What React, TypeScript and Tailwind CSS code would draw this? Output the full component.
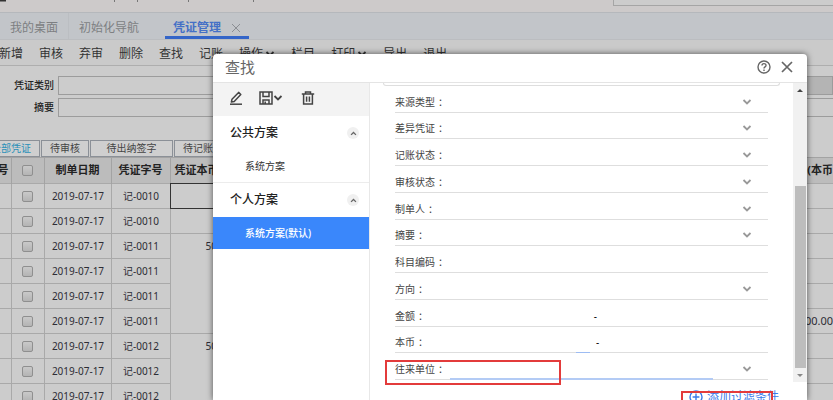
import { ReactNode } from 'react';

const toolbarItems = [
  { name: '新增' },
  { name: '审核' },
  { name: '弃审' },
  { name: '删除' },
  { name: '查找' },
  { name: '记账' },
  { name: '操作', menu: true },
  { name: '栏目' },
  { name: '打印', menu: true },
  { name: '导出' },
  { name: '退出' },
];

// span: how many rows the amount cell covers
const vouchers = [
  { no: '记-0010', span: 1, amount: '', right: '', active: true },
  { no: '记-0010', span: 1, amount: '', right: '' },
  { no: '记-0011', span: 4, amount: '50', right: '' },
  { no: '记-0011', span: 0, amount: '', right: '' },
  { no: '记-0011', span: 0, amount: '', right: '' },
  { no: '记-0011', span: 0, amount: '', right: '00.00' },
  { no: '记-0012', span: 3, amount: '50', right: '' },
  { no: '记-0012', span: 0, amount: '', right: '' },
  { no: '记-0012', span: 0, amount: '', right: '' },
];

const fields = [
  { label: '来源类型', type: 'select' },
  { label: '差异凭证', type: 'select' },
  { label: '记账状态', type: 'select' },
  { label: '审核状态', type: 'select' },
  { label: '制单人', type: 'select' },
  { label: '摘要', type: 'select' },
  { label: '科目编码', type: 'text' },
  { label: '方向', type: 'select' },
  { label: '金额', type: 'range' },
  { label: '本币', type: 'range' },
  { label: '往来单位', type: 'select' },
];

function Chevron({ className = '', up = false }: { className?: string; up?: boolean }) {
  return (
    <svg viewBox="0 0 10 10" className={`shrink-0 ${className}`} fill="none" stroke="currentColor" strokeWidth="1.8">
      <path d={up ? 'M1.5 7 5 3.5 8.5 7' : 'M1.5 3 5 6.5 8.5 3'} />
    </svg>
  );
}

function PageHeader() {
  return (
    <>
      <div className="flex h-3 justify-end bg-[#cdcaca]">
        <svg viewBox="0 0 260 3" className="mr-auto h-[3px] w-[260px]" fill="#777">
          <rect width="6" height="1.5" fill="#333" />
          <rect x="114" width="1" height="2" />
          <rect x="137" width="1" height="2" />
          <rect x="188" width="1" height="2" />
          <rect x="253" width="1" height="2" />
        </svg>
        <div className="h-1.5 w-[220px] border-b border-l border-[#a5a5a5] bg-[#cccccc]" />
      </div>
      <nav className="flex h-7 items-stretch border-y border-t-[#b5b8bc] border-b-[#bbbdc0] bg-[#c2c5c9] text-[12px] text-[#7d7f82]">
        <a href="#desktop" className="flex items-center border-r border-[#bbbec2] px-2.5 pt-1">我的桌面</a>
        <a href="#init" className="flex items-center px-2.5 pt-1">初始化导航</a>
        <div className="ml-4 flex w-[84px] items-center justify-between border-b-[3px] border-[#3465c8] pt-1.5 pr-2 pl-2">
          <a href="#voucher" className="font-bold text-[#4470c6]">凭证管理</a>
          <button aria-label="关闭">
            <svg viewBox="0 0 10 10" className="size-2.5" stroke="#8b8e93" fill="none">
              <path d="M1 1 9 9M9 1 1 9" />
            </svg>
          </button>
        </div>
      </nav>
      <div className="flex h-[26px] items-center gap-4 border-b border-[#aeaeae] bg-[#cacaca] pt-0.5 text-[12px] text-[#333]">
        {toolbarItems.map(({ name, menu }) => (
          <button key={name} className="flex shrink-0 items-center first:-ml-px">
            {name}
            {menu && <Chevron className="ml-0.5 size-2.5" />}
          </button>
        ))}
      </div>
    </>
  );
}

function FilterForm() {
  return (
    <form className="flex flex-col gap-[3px] pt-2.5 pb-[23px] text-[10px] font-medium text-[#222]">
      <div className="flex h-[19px] items-center">
        <label htmlFor="kind" className="w-[58px] pr-1 text-right">凭证类别</label>
        <input id="kind" className="h-full min-w-0 flex-1 border border-[#9c9c9c] bg-[#cccccc]" />
        <input aria-label="凭证字号" disabled className="h-full min-w-0 flex-1 border border-[#9c9c9c] bg-[#b4b4b4]" />
      </div>
      <div className="flex h-[19px] items-center">
        <label htmlFor="summary" className="w-[58px] pr-1 text-right">摘要</label>
        <input id="summary" className="h-full min-w-0 flex-1 border border-r-0 border-[#9c9c9c] bg-[#cccccc]" />
      </div>
    </form>
  );
}

function Check({ label }: { label: string }) {
  return (
    <input
      type="checkbox"
      aria-label={label}
      className="mx-auto block size-[11px] appearance-none rounded-[2px] border border-[#8f8f8f] bg-linear-to-b from-[#c9c9c9] to-[#b4b4b4]"
    />
  );
}

function VoucherTable() {
  return (
    <>
      <div className="flex h-[17px] gap-px text-[10px] text-[#444]">
        <button className="flex w-10 shrink-0 items-center justify-end border border-l-0 border-[#8b9097] bg-[#cfcfcf] pr-2 whitespace-nowrap text-[#2b8fb8]">
          全部凭证
        </button>
        <button className="w-12 shrink-0 border border-[#8b9097] bg-[#cfcfcf]">待审核</button>
        <button className="w-[83px] shrink-0 border border-[#8b9097] bg-[#cfcfcf]">待出纳签字</button>
        <button className="w-12 shrink-0 border border-[#8b9097] bg-[#cfcfcf]">待记账</button>
      </div>
      <table className="w-full table-fixed border-collapse text-[10px] text-[#2d2d35]">
        <colgroup>
          <col className="w-[11px]" />
          <col className="w-[33px]" />
          <col className="w-[67px]" />
          <col className="w-[59px]" />
          <col className="w-[60px]" />
          <col />
        </colgroup>
        <thead className="bg-[#bcbcbc] text-[11px] text-[#222]">
          <tr className="h-[26px] border-y border-[#a3a3a3] whitespace-nowrap">
            <th className="border-r border-[#a3a3a3]">
              <div className="flex justify-end pr-0.5">号</div>
            </th>
            <th className="border-r border-[#a3a3a3]"><Check label="全选" /></th>
            <th className="border-r border-[#a3a3a3]">制单日期</th>
            <th className="border-r border-[#a3a3a3]">凭证字号</th>
            <th className="pl-1 text-left">凭证本币</th>
            <th className="text-right">(本币</th>
          </tr>
        </thead>
        <tbody>
          {vouchers.map((v, i) => (
            <tr key={i} className="h-[25px]">
              <td className="border border-l-0 border-[#a9a9a9]" />
              <td className="border border-[#a9a9a9]"><Check label={v.no} /></td>
              <td className="border border-[#a9a9a9] pl-px text-center">2019-07-17</td>
              <td className="border border-[#a9a9a9] pl-px text-center">{v.no}</td>
              {v.span > 0 && (
                <td
                  rowSpan={v.span}
                  className={`align-top leading-6 ${v.active ? 'border border-double border-[#333]' : 'border border-[#a9a9a9]'}`}
                >
                  <div className="pl-[35px]">{v.amount}</div>
                </td>
              )}
              <td className="border-y border-[#a9a9a9] text-right text-[11px]">{v.right}</td>
            </tr>
          ))}
        </tbody>
      </table>
    </>
  );
}

function Scheme({ title, children }: { title: string; children: ReactNode }) {
  return (
    <section className="border-b border-[#ececec] last:border-0">
      <div className="flex h-[34px] items-center justify-between pr-2.5 pl-[17px]">
        <h3 className="text-[12px] font-medium text-[#222]">{title}</h3>
        <button aria-label={title} className="flex size-3 items-center justify-center rounded-full bg-[#f0f0f0] text-[#666]">
          <Chevron up className="size-[7px]" />
        </button>
      </div>
      {children}
    </section>
  );
}

function SchemePanel() {
  return (
    <aside className="w-[157px] shrink-0 border-r border-[#e8e8e8]">
      <div className="flex h-[33px] items-center bg-[#f3f3f3] pr-4 pb-1 pl-4 text-[#444]">
        <button aria-label="编辑">
          <svg viewBox="0 0 14 14" className="size-3.5" fill="none" stroke="currentColor" strokeWidth="1.5">
            <path d="M3 8.2 9.6 1.4 11.8 3.6 5.2 10.4 2.4 11Z" strokeLinejoin="round" />
            <path d="M1 13.2H13" />
          </svg>
        </button>
        <button aria-label="保存" className="ml-4 flex items-center">
          <svg viewBox="0 0 14 14" className="size-3.5" fill="none" stroke="currentColor" strokeWidth="1.5">
            <path d="M1 1H13V13H1Z" />
            <path d="M4 1V5.4H10V1M4 13V9H10V13M6.2 10.5V13" />
          </svg>
          <Chevron className="size-2.5" />
        </button>
        <button aria-label="删除" className="ml-[18px]">
          <svg viewBox="0 0 14 14" className="size-3.5" fill="none" stroke="currentColor" strokeWidth="1.5">
            <path d="M.8 3H13.2M4.5 3V1H9.5V3M2.6 3V13H11.4V3M5.6 5.4V10.8M8.4 5.4V10.8" />
          </svg>
        </button>
      </div>
      <Scheme title="公共方案">
        <button className="block h-8 w-full pl-8 text-left text-[10px] text-[#333]">系统方案</button>
      </Scheme>
      <Scheme title="个人方案">
        <button className="block h-8 w-full bg-[#3a87fb] pl-8 text-left text-[10px] font-medium text-white">
          系统方案(默认)
        </button>
      </Scheme>
    </aside>
  );
}

function Field({ label, type }: { label: string; type: string }) {
  const last = label === '往来单位';

  return (
    <div className="flex items-end border-b border-[#dedede] text-[10px] leading-4 text-[#444]">
      <label htmlFor={label} className="shrink-0 pb-0.5">
        {label}
        <span className="pl-[3px]">：</span>
      </label>
      {type === 'select' && (
        <div className="relative flex h-full flex-1 items-end">
          <select
            id={label}
            className={`-mb-px h-4 appearance-none outline-none ${last ? 'mr-[55px] ml-0.5 flex-1 border-b-2 border-[#b3cbf5]' : 'w-full'}`}
          />
          <Chevron className="pointer-events-none absolute right-4 bottom-[5px] size-2.5 text-[#999]" />
        </div>
      )}
      {type === 'text' && <input id={label} className="h-4 min-w-0 flex-1 outline-none" />}
      {type === 'range' && (
        <div className="flex h-full flex-1 items-end justify-end">
          <input id={label} className="h-4 min-w-0 flex-1 outline-none" />
          {label === '本币' && <span className="-mb-px mr-1.5 w-3.5 border-b border-[#9dbcf3]" />}
          <span className="pb-0.5 text-black">-</span>
          <input aria-label={`${label}至`} className="h-4 w-[171px] outline-none" />
        </div>
      )}
    </div>
  );
}

function SearchDialog() {
  return (
    <div
      role="dialog"
      aria-label="查找"
      className="absolute top-[54px] right-[26px] bottom-0 left-[213px] rounded-t bg-white shadow-[0_0_6px_rgba(0,0,0,0.6)]"
    >
      <header className="flex h-[29px] items-center border-b border-[#e4e4e4] pr-3.5 pb-0.5 pl-3 text-[#666]">
        <h2 className="mr-auto text-[15px]">查找</h2>
        <button aria-label="帮助">
          <svg viewBox="0 0 14 14" className="size-3.5" fill="none" stroke="currentColor" strokeWidth="1.4">
            <circle cx="7" cy="7" r="6" />
            <path d="M5 5.6C5 3 9 3 9 5.4 9 6.8 7 6.9 7 8.4M7 9.6V10.9" />
          </svg>
        </button>
        <button aria-label="关闭" className="ml-2.5">
          <svg viewBox="0 0 12 12" className="size-3" fill="none" stroke="currentColor" strokeWidth="1.7">
            <path d="M1 1 11 11M11 1 1 11" />
          </svg>
        </button>
      </header>
      <div className="flex">
        <SchemePanel />
        <div className="min-w-0 flex-1">
          <div className="flex h-[299px]">
            <div className="flex flex-1 flex-col pb-0.5 pl-[13px]">
              <div className="mr-[13px] h-[3px] rounded-b-sm border border-t-0 border-[#dedede]" />
              <form className="mr-[25px] ml-3 grid flex-1 auto-rows-fr">
                {fields.map((f) => (
                  <Field key={f.label} label={f.label} type={f.type} />
                ))}
              </form>
            </div>
            <div className="flex w-3.5 flex-col items-center bg-[#f1f1f1]">
              <svg viewBox="0 0 6 3" className="mt-1.5 h-[3px] w-1.5" fill="#444">
                <path d="M0 3 3 0 6 3Z" />
              </svg>
              <div className="mt-[94px] mb-1.5 w-[11px] flex-1 bg-[#bdbdbd]" />
              <svg viewBox="0 0 6 3" className="mb-[5px] h-[3px] w-1.5" fill="#888">
                <path d="M0 0 3 3 6 0Z" />
              </svg>
            </div>
          </div>
          <button className="mt-1.5 mr-7 ml-auto flex items-center gap-1 text-[12px] leading-[18px] text-[#3a7bea]">
            <svg viewBox="0 0 14 14" className="size-3.5" fill="none" stroke="currentColor" strokeWidth="1.4">
              <circle cx="7" cy="7" r="6" />
              <path d="M7 3.6V10.4M3.6 7H10.4" />
            </svg>
            添加过滤条件
          </button>
        </div>
      </div>
      {/* red marks over the form */}
      <div className="pointer-events-none absolute top-[306px] left-[172px] h-[25px] w-[176px] border-2 border-[#e33b3b]" />
      <div className="pointer-events-none absolute top-[337px] right-[34px] h-5 w-[92px] border-2 border-[#e33b3b]" />
    </div>
  );
}

export default function App() {
  return (
    <div className="relative h-screen overflow-hidden bg-[#cccccc] font-['Noto_Sans','Noto_Sans_CJK_SC',sans-serif]">
      <PageHeader />
      <FilterForm />
      <VoucherTable />
      <SearchDialog />
    </div>
  );
}
